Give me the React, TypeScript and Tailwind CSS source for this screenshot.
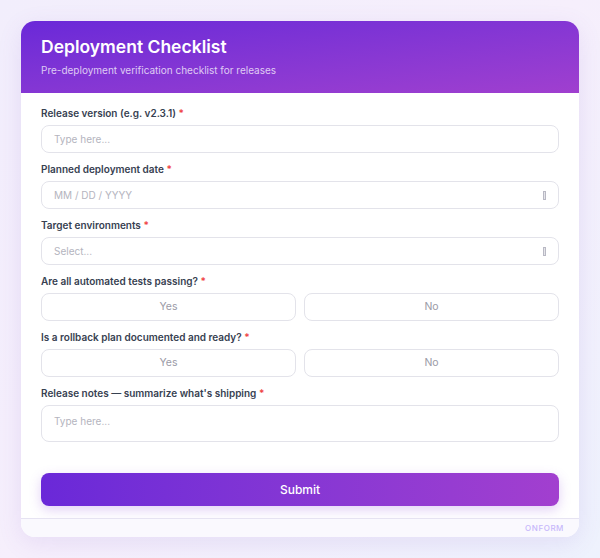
import React from "react";

const font = { fontFamily: "Inter, 'Noto Sans', sans-serif" };

function Label({ text }: { text: string }) {
  return (
    <div className="mb-1 h-4 text-[10px] font-semibold leading-4 text-[#374151]">
      {text} <span className="text-[#ef4444]">*</span>
    </div>
  );
}

function PickerGlyph() {
  return <span className="h-[9px] w-[3px] border border-[#b9b9c4] bg-[#e5e5ea]" />;
}

function TextInput({ placeholder, icon }: { placeholder: string; icon?: boolean }) {
  return (
    <div className="flex h-7 items-center justify-between rounded-lg border border-[#e3e3ea] bg-white pl-3 pr-3 text-[10px] text-[#b4b4be]">
      <span>{placeholder}</span>
      {icon && <PickerGlyph />}
    </div>
  );
}

function YesNo() {
  return (
    <div className="grid grid-cols-2 gap-2">
      {["Yes", "No"].map((o) => (
        <div
          key={o}
          className="flex h-7 items-center justify-center rounded-lg border border-[#e3e3ea] bg-white text-[10.5px] text-[#9a9aa6]"
        >
          {o}
        </div>
      ))}
    </div>
  );
}

export default function App() {
  return (
    <div
      className="min-h-[558px] bg-[linear-gradient(135deg,#f2eefc_0%,#f6effc_50%,#eef2fd_100%)] p-[21px]"
      style={font}
    >
      <div className="overflow-hidden rounded-[14px] bg-white shadow-[0_6px_24px_rgba(120,80,200,0.12)]">
        <div className="h-[72px] bg-gradient-to-br from-[#6a28d8] to-[#a03fcf] px-5 pt-[14px]">
          <div className="text-[17.5px] font-semibold leading-6 text-white">Deployment Checklist</div>
          <div className="mt-[3px] text-[10px] leading-4 text-white/75">
            Pre-deployment verification checklist for releases
          </div>
        </div>

        <div className="px-5 pt-3">
          <div className="flex flex-col gap-2">
            <div>
              <Label text="Release version (e.g. v2.3.1)" />
              <TextInput placeholder="Type here..." />
            </div>
            <div>
              <Label text="Planned deployment date" />
              <TextInput placeholder="MM / DD / YYYY" icon />
            </div>
            <div>
              <Label text="Target environments" />
              <TextInput placeholder="Select..." icon />
            </div>
            <div>
              <Label text="Are all automated tests passing?" />
              <YesNo />
            </div>
            <div>
              <Label text="Is a rollback plan documented and ready?" />
              <YesNo />
            </div>
            <div>
              <Label text="Release notes — summarize what's shipping" />
              <div className="h-[37px] rounded-lg border border-[#e3e3ea] bg-white px-3 pt-[7px] text-[10px] leading-4 text-[#b4b4be]">
                Type here...
              </div>
            </div>
          </div>

          <button className="mt-[31px] flex h-[33px] w-full items-center justify-center rounded-lg bg-gradient-to-r from-[#6a28d8] to-[#a23fcf] text-[12px] font-medium text-white shadow-[0_4px_12px_rgba(140,70,220,0.25)]">
            Submit
          </button>
        </div>

        <div className="mt-3 flex h-[19px] items-center justify-end border-t border-[#e6e3f2] bg-[#faf9fe] pr-[15px]">
          <span className="text-[8px] font-medium tracking-[0.07em] text-[#c7b8fb]">ONFORM</span>
        </div>
      </div>
    </div>
  );
}
